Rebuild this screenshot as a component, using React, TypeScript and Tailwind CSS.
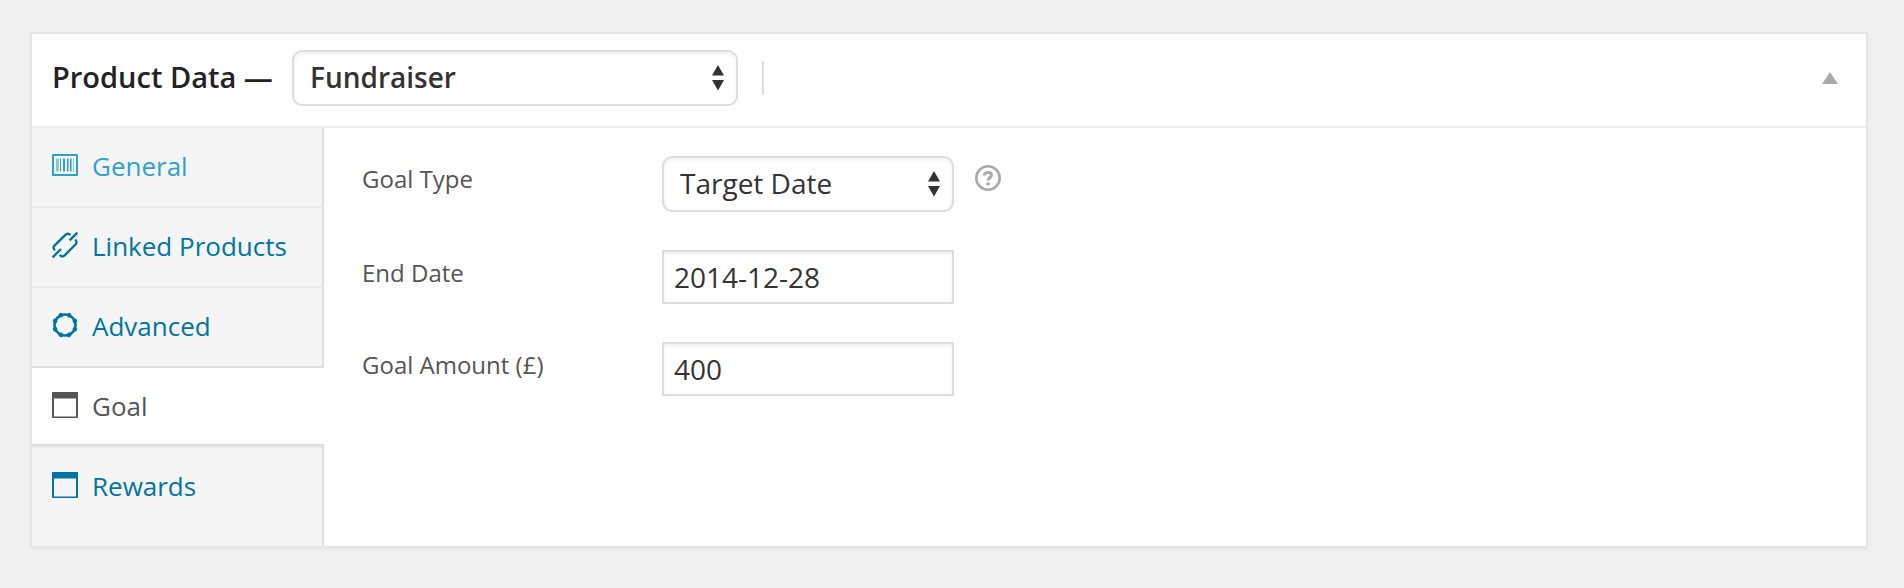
import type { ReactNode } from "react";

function GeneralIcon() {
  return (
    <svg viewBox="0 0 26 26" className="size-[26px]" fill="currentColor" aria-hidden="true">
      <path fillRule="evenodd" d="M1 2h24a1 1 0 0 1 1 1v20a1 1 0 0 1-1 1H1a1 1 0 0 1-1-1V3a1 1 0 0 1 1-1Zm1 2v18h22V4Z" />
      <path d="M8 6.5h1v13H8zM11 6.5h2v13h-2zM15 6.5h1v13h-1zM18 6.5h1v13h-1z" />
      <path opacity="0.55" d="M4 6.5h3v13H4zM16 6.5h1v13h-1zM19 6.5h1v13h-1zM21 6.5h1v13h-1z" />
    </svg>
  );
}

function LinkIcon() {
  return (
    <svg viewBox="0 0 26 26" className="size-[26px]" fill="none" stroke="currentColor" strokeWidth="2.4" aria-hidden="true">
      <path d="M3 18.200C1.200 16.700 1.200 14.900 2.500 13.600L13.400 2.900C14.700 1.600 16.700 1.200 18.600 3" />
      <path d="M17.600 8.400L25.400 0.600M0.600 25.400L9 17" />
      <path d="M7.500 23C9.300 24.800 11.400 24.500 12.700 23.300L23.500 12.500C24.700 11.300 25 9.300 23.200 7.600" />
    </svg>
  );
}

const teeth = [22.5, 67.5, 112.5, 157.5, 202.5, 247.5, 292.5, 337.5];

function GearIcon() {
  return (
    <svg viewBox="0 0 26 26" className="size-[26px]" fill="currentColor" aria-hidden="true">
      <circle cx="13" cy="13" r="10.500" fill="none" stroke="currentColor" strokeWidth="2.600" />
      {teeth.map((angle) => (
        <circle key={angle} cx="13" cy="2.300" r="2.300" transform={`rotate(${angle} 13 13)`} />
      ))}
    </svg>
  );
}

function WindowIcon() {
  return (
    <svg viewBox="0 0 26 26" className="size-[26px]" fill="currentColor" aria-hidden="true">
      <path fillRule="evenodd" d="M0 0h26v25a1 1 0 0 1-1 1H1a1 1 0 0 1-1-1ZM2 6.500V24.500H24V6.500Z" />
    </svg>
  );
}

function HelpIcon() {
  return (
    <svg viewBox="0 0 26 26" className="size-[26px]" fill="none" stroke="currentColor" aria-hidden="true">
      <circle cx="13" cy="13" r="11.700" strokeWidth="2.600" />
      <path d="M9.300 10.400C9.300 8.500 10.800 7.600 13 7.600S16.500 8.600 16.500 10.200C16.500 12.700 13.100 12.300 13.100 15.600" strokeWidth="3" />
      <path d="M11.500 17.300h3.200v3.200h-3.200z" fill="currentColor" stroke="none" />
    </svg>
  );
}

function SelectBox({ id, label, options, className }: { id: string; label?: string; options: string[]; className: string }) {
  return (
    <div className={`relative ${className}`}>
      <select
        id={id}
        aria-label={label}
        className="block h-14 w-full appearance-none rounded-[10px] border-2 border-[#ddd] bg-white pr-12 pb-0.5 pl-4 text-[28px] text-[#333] shadow-[inset_0_2px_4px_rgba(0,0,0,0.07)]"
      >
        {options.map((option) => (
          <option key={option}>{option}</option>
        ))}
      </select>
      <svg viewBox="0 0 12 26" className="pointer-events-none absolute top-[15px] right-[14px] h-[26px] w-3" fill="#333" aria-hidden="true">
        <path d="M6 0L12 10.500H0ZM0 15H12L6 25.500Z" />
      </svg>
    </div>
  );
}

function Field({ id, label, children }: { id: string; label: string; children: ReactNode }) {
  return (
    <div className="flex items-start">
      <label htmlFor={id} className="w-[300px] shrink-0 pt-[5px] text-2xl/9 text-[#555]">
        {label}
      </label>
      {children}
    </div>
  );
}

const inputClass =
  "h-[54px] w-[292px] border-2 border-[#ddd] bg-white px-2.5 text-[28px] text-[#333] shadow-[inset_0_2px_4px_rgba(0,0,0,0.07)]";

const tabs = [
  { name: "General", icon: <GeneralIcon />, className: "h-20 border-b-2 border-b-[#eaeaea] border-r-[#dfdfdf] bg-[#f5f5f5] pb-1 text-[#2ea2cc]" },
  { name: "Linked Products", icon: <LinkIcon />, className: "h-20 border-b-2 border-b-[#eaeaea] border-r-[#dfdfdf] bg-[#f5f5f5] pb-1 text-[#0074a2]" },
  { name: "Advanced", icon: <GearIcon />, className: "h-20 border-b-2 border-b-[#dfdfdf] border-r-[#dfdfdf] bg-[#f5f5f5] pb-1 text-[#0074a2]" },
  { name: "Goal", icon: <WindowIcon />, className: "h-[76px] border-r-white bg-white pb-0.5 text-[#555]" },
  { name: "Rewards", icon: <WindowIcon />, className: "h-[102px] border-t-2 border-t-[#dfdfdf] border-r-[#dfdfdf] bg-[#f5f5f5] pb-[22px] text-[#0074a2] shadow-[inset_0_2px_0_#eaeaea]" },
];

export default function App() {
  return (
    <div className="min-h-screen bg-[#f0f0f0] pt-8 pr-9 pb-10 pl-[30px] font-['Open_Sans',sans-serif]">
      <section className="border-2 border-[#e5e5e5] bg-white shadow-[0_2px_2px_rgba(0,0,0,0.04)]">
        <header className="flex h-[94px] items-center border-b-2 border-[#eee] pr-7 pb-1 pl-5 font-semibold">
          <h2 className="w-[240px] pb-0.5 text-[29px] whitespace-nowrap text-[#222]">Product Data —</h2>
          <SelectBox id="product-type" label="Product type" options={["Fundraiser", "Simple product"]} className="w-[446px]" />
          <span className="ml-6 h-[34px] w-0.5 bg-[#ddd]" />
          <button type="button" aria-label="Toggle panel" className="ml-auto text-[#aaa]">
            <svg viewBox="0 0 16 12" className="h-3 w-4" fill="currentColor" aria-hidden="true">
              <path d="M8 0L16 12H0Z" />
            </svg>
          </button>
        </header>
        <div className="flex">
          <nav className="flex w-[292px] shrink-0 flex-col">
            {tabs.map((tab) => (
              <a
                key={tab.name}
                href={`#${tab.name}`}
                className={`flex items-center gap-3.5 border-r-2 pl-5 text-[26px] ${tab.className}`}
              >
                {tab.icon}
                <span className="pt-0.5">{tab.name}</span>
              </a>
            ))}
          </nav>
          <form className="flex flex-1 flex-col gap-[38px] pt-7 pl-[38px]">
            <Field id="goal-type" label="Goal Type">
              <SelectBox id="goal-type" options={["Target Date", "Target Goal"]} className="w-[292px]" />
              <button type="button" aria-label="Help" className="mt-[9px] ml-[21px] text-[#aaa]">
                <HelpIcon />
              </button>
            </Field>
            <Field id="end-date" label="End Date">
              <input id="end-date" type="text" defaultValue="2014-12-28" className={inputClass} />
            </Field>
            <Field id="goal-amount" label="Goal Amount (£)">
              <input id="goal-amount" type="text" defaultValue="400" className={inputClass} />
            </Field>
          </form>
        </div>
      </section>
    </div>
  );
}
